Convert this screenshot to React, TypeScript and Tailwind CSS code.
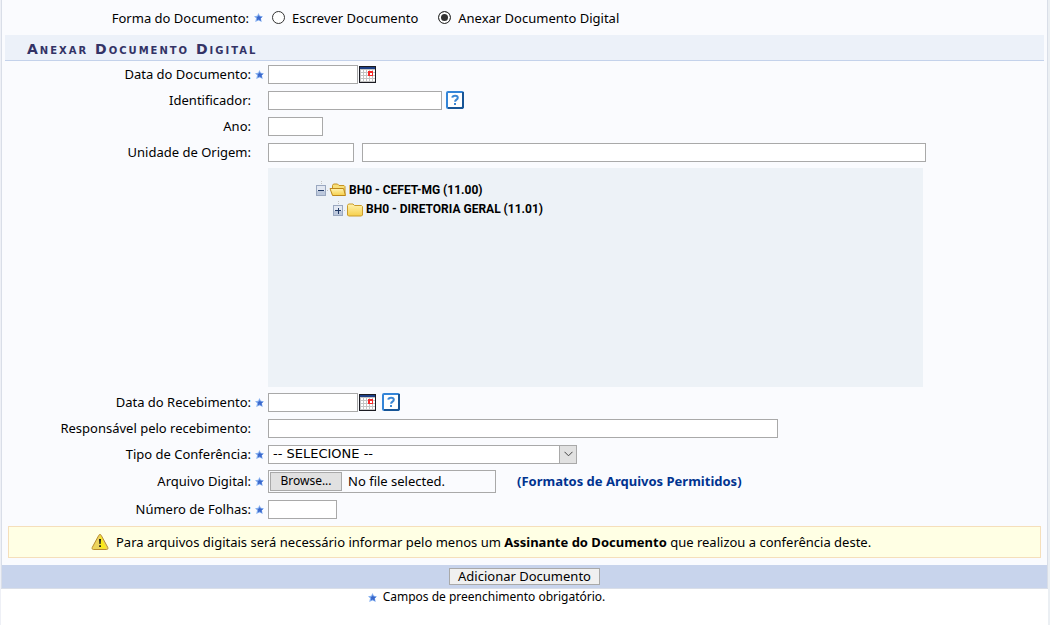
import { useRef, useState } from "react";
import type { ReactNode } from "react";

const inputClass = "h-[19px] border border-[#a9a9a9] bg-white px-1 outline-none";

function Star() {
  return (
    <svg width="9" height="9" viewBox="0 0 9 9" className="shrink-0" aria-hidden="true">
      <path d="M4.5 0 5.8 2.7 9 3.2 6.9 5.3 7.8 9 4.5 7.4 1.2 9 2.1 5.3 0 3.2 3.2 2.7Z" fill="#86b0f0" />
      <path d="M4.8 2 5.8 3.7 8.1 4 6.5 5.5 7 8 4.7 6.5 2.8 7.4 3.2 5.2 2.5 4 4.1 3.6Z" fill="#3a68cc" />
    </svg>
  );
}

function CalendarIcon() {
  return (
    <svg width="17" height="17" viewBox="0 0 17 17" shapeRendering="crispEdges" aria-hidden="true">
      <rect width="17" height="17" fill="#1b1b22" />
      <rect x="1" y="1" width="15" height="2" fill="#1d3f86" />
      <rect x="1" y="3" width="15" height="13" fill="#c4c4c4" />
      {[4, 7, 10, 13].map((y) =>
        [2, 5, 8, 11, 14].map((x) => (
          <rect key={`${x}-${y}`} x={x} y={y} width="2" height="2" fill="#fff" />
        ))
      )}
      <rect x="9" y="5" width="5" height="5" fill="#f42a2a" />
      <rect x="11" y="7" width="2" height="2" fill="#fff" />
    </svg>
  );
}

function HelpIcon() {
  return (
    <svg width="18" height="18" viewBox="0 0 18 18" aria-hidden="true">
      <rect x="1" y="1" width="16" height="16" rx="1" fill="#fff" stroke="#3485d8" strokeWidth="2" />
      <path d="M17 1v15l-1 1H2" fill="none" stroke="#175596" strokeWidth="2" />
      <path d="M6.3 6.6C6.6 4.2 11.8 4 11.8 6.8c0 2-2.7 1.8-2.7 4" fill="none" stroke="#3b87d4" strokeWidth="2" />
      <rect x="8" y="12" width="2" height="2" fill="#3b87d4" />
    </svg>
  );
}

function ToggleIcon({ open }: { open: boolean }) {
  return (
    <svg width="16" height="18" viewBox="0 0 16 18" shapeRendering="crispEdges" aria-hidden="true">
      <path d="M8.5 0v1M8.5 2v1M14 9.5h1" stroke="#c3c3c3" />
      <rect x="3" y="4" width="10" height="11" rx="1" fill="#9aa8c0" />
      <rect x="4" y="5" width="8" height="9" fill="#e2e8f2" />
      <rect x="4" y="10" width="8" height="4" fill="#bcc8dc" />
      <path d={open ? "M5 9.5h6" : "M5 9.5h6M8.5 7v6"} stroke="#1f3864" />
    </svg>
  );
}

function FolderIcon({ open }: { open: boolean }) {
  return (
    <svg width="18" height="16" viewBox="0 0 18 16" aria-hidden="true">
      <defs>
        <linearGradient id="folder" x1="0" y1="0" x2="0" y2="1">
          <stop offset="0" stopColor="#fff3b0" />
          <stop offset="1" stopColor="#f6cf4a" />
        </linearGradient>
      </defs>
      {open ? (
        <>
          <path d="M3.5 12.5v-9l1-1.5h4l1.5 1.5h5l1 1v8Z" fill="#f8df78" stroke="#c69423" />
          <path d="M1 6.5h13.5l2 7H3.5Z" fill="url(#folder)" stroke="#bd8719" />
        </>
      ) : (
        <path d="M1.5 13V3.5l1-1.5h4.5l1.5 1.5h7l1 1V13l-1 1h-13Z" fill="url(#folder)" stroke="#cb9c2b" />
      )}
    </svg>
  );
}

function WarningIcon() {
  return (
    <svg width="18" height="18" viewBox="0 0 18 18" aria-hidden="true">
      <path d="M9 1.5c.7 0 1 .4 1.3 1l6.5 12c.5 1-.1 2-1.2 2H2.4c-1.1 0-1.7-1-1.2-2l6.5-12c.3-.6.6-1 1.3-1Z" fill="#ecd45d" stroke="#b98b2d" />
      <path d="M9 3v12.5h6.5L9.7 3.5Z" fill="#fff200" opacity=".7" />
      <path d="M8 6h2l-.4 5H8.4ZM8.2 12.3h1.7V14H8.2Z" fill="#1a1a1a" />
    </svg>
  );
}

interface FieldProps {
  id: string;
  label: string;
  required?: boolean;
  tall?: boolean;
  children: ReactNode;
}

function Field({ id, label, required, tall, children }: FieldProps) {
  return (
    <div className={`flex items-center ${tall ? "h-7" : "h-[26px]"}`}>
      <label htmlFor={id} className="w-[249px] shrink-0 text-right">{label}</label>
      <span className="flex w-[17px] shrink-0 justify-center">{required && <Star />}</span>
      {children}
    </div>
  );
}

export default function App() {
  const [forma, setForma] = useState("anexar");
  const [fileName, setFileName] = useState("");
  const fileRef = useRef<HTMLInputElement>(null);
  const radioClass =
    "size-[13px] shrink-0 appearance-none rounded-full border border-[#333] bg-white checked:bg-[#333] checked:shadow-[inset_0_0_0_2px_#fff]";

  return (
    <div className="min-h-screen border-l border-[#eef0f6] bg-white font-['Noto_Sans',Verdana,sans-serif] text-[13px] leading-4 text-black">
      <div className="flex min-h-screen flex-col border-r-2 border-[#ebeff3]">
        <form onSubmit={(e) => e.preventDefault()} className="border-x border-b border-[#d9dee8] bg-[#fafbfe]">
          <div className="flex h-[35px] items-center" role="radiogroup" aria-labelledby="forma">
            <span id="forma" className="w-[247px] shrink-0 text-right">Forma do Documento:</span>
            <span className="ml-1 flex w-[19px] shrink-0 pl-px"><Star /></span>
            <label className="flex items-center gap-[7px]">
              <input type="radio" name="forma" className={radioClass} checked={forma === "escrever"} onChange={() => setForma("escrever")} />
              Escrever Documento
            </label>
            <label className="ml-5 flex items-center gap-[7px]">
              <input type="radio" name="forma" className={radioClass} checked={forma === "anexar"} onChange={() => setForma("anexar")} />
              Anexar Documento Digital
            </label>
          </div>

          <h2 className="mx-[3px] h-[26px] border-b border-[#c4d2eb] bg-[#ecf1f9] pl-[22px] font-['DejaVu_Sans',Verdana,sans-serif] text-[14px] leading-7 font-bold tracking-[2px] text-[#333366] [font-variant:small-caps]">
            Anexar Documento Digital
          </h2>

          <Field id="data" label="Data do Documento:" required>
            <input id="data" className={`${inputClass} w-[90px]`} />
            <button type="button" aria-label="Calendário" className="ml-px"><CalendarIcon /></button>
          </Field>
          <Field id="identificador" label="Identificador:">
            <input id="identificador" className={`${inputClass} w-[174px]`} />
            <button type="button" aria-label="Ajuda" className="ml-1"><HelpIcon /></button>
          </Field>
          <Field id="ano" label="Ano:">
            <input id="ano" className={`${inputClass} w-[55px]`} />
          </Field>
          <Field id="unidade" label="Unidade de Origem:">
            <input id="unidade" className={`${inputClass} w-[86px]`} />
            <input aria-label="Nome da unidade" className={`${inputClass} ml-2 w-[564px]`} />
          </Field>

          {/* Unit tree */}
          <div className="mt-[3px] mb-[2px] ml-[266px] h-[219px] w-[655px] bg-[#edf2f7] pt-3 pl-[45px] font-['Roboto',Arial,sans-serif] text-[12px] font-bold">
            <div className="flex h-5 items-center">
              <button type="button" aria-label="Recolher"><ToggleIcon open /></button>
              <FolderIcon open />
              <span className="pl-[2px]">BH0 - CEFET-MG (11.00)</span>
            </div>
            <div className="flex h-5 items-center pl-[17px]">
              <button type="button" aria-label="Expandir"><ToggleIcon open={false} /></button>
              <FolderIcon open={false} />
              <span className="pb-[2px] pl-[2px]">BH0 - DIRETORIA GERAL (11.01)</span>
            </div>
          </div>

          <Field id="recebimento" label="Data do Recebimento:" required>
            <input id="recebimento" className={`${inputClass} w-[90px]`} />
            <button type="button" aria-label="Calendário" className="ml-px"><CalendarIcon /></button>
            <button type="button" aria-label="Ajuda" className="ml-[6px]"><HelpIcon /></button>
          </Field>
          <Field id="responsavel" label="Responsável pelo recebimento:">
            <input id="responsavel" className={`${inputClass} w-[510px]`} />
          </Field>
          <Field id="tipo" label="Tipo de Conferência:" required>
            <div className="relative w-[309px]">
              <select id="tipo" className="block h-[19px] w-full appearance-none border border-[#a9a9a9] bg-white pl-1 font-['DejaVu_Sans',Verdana,sans-serif] leading-4 outline-none">
                <option>-- SELECIONE --</option>
              </select>
              <span className="pointer-events-none absolute inset-y-0 right-0 flex w-[18px] items-center justify-center border border-[#a9a9a9] bg-[#e1e1e1]">
                <svg width="9" height="6" viewBox="0 0 9 6" aria-hidden="true">
                  <path d="M.5.8l4 4 4-4" fill="none" stroke="#444" />
                </svg>
              </span>
            </div>
          </Field>
          <Field id="arquivo" label="Arquivo Digital:" required tall>
            <div className="flex h-[23px] w-[228px] items-center border border-[#a9a9a9] pl-px">
              <input ref={fileRef} id="arquivo" type="file" className="hidden" onChange={(e) => setFileName(e.target.files?.[0]?.name ?? "")} />
              <button type="button" onClick={() => fileRef.current?.click()} className="h-[19px] w-[72px] border border-[#a9a9a9] bg-[#e1e1e1] text-[12px] leading-4">
                Browse...
              </button>
              <span className="pl-[6px]">{fileName || "No file selected."}</span>
            </div>
            <a href="#formatos" className="ml-[21px] font-bold text-[#003390]">(Formatos de Arquivos Permitidos)</a>
          </Field>
          <Field id="folhas" label="Número de Folhas:" required tall>
            <input id="folhas" className={`${inputClass} w-[69px]`} />
          </Field>

          <div className="mx-[6px] mt-[3px] mb-[7px] flex h-8 items-center border border-[#f5dfbb] bg-[#ffffe4] pl-[82px]">
            <WarningIcon />
            <p className="pl-[7px]">
              Para arquivos digitais será necessário informar pelo menos um <b>Assinante do Documento</b> que realizou a conferência deste.
            </p>
          </div>

          <div className="flex h-[23px] items-center justify-center bg-[#c8d4ec]">
            <button type="submit" className="h-[17px] border border-[#a9a9a9] bg-[#f0f0f0] px-2 leading-[15px]">
              Adicionar Documento
            </button>
          </div>
        </form>

        <p className="flex items-center justify-center gap-[6px] pr-[76px] text-[12px]">
          <Star />
          Campos de preenchimento obrigatório.
        </p>
      </div>
    </div>
  );
}
